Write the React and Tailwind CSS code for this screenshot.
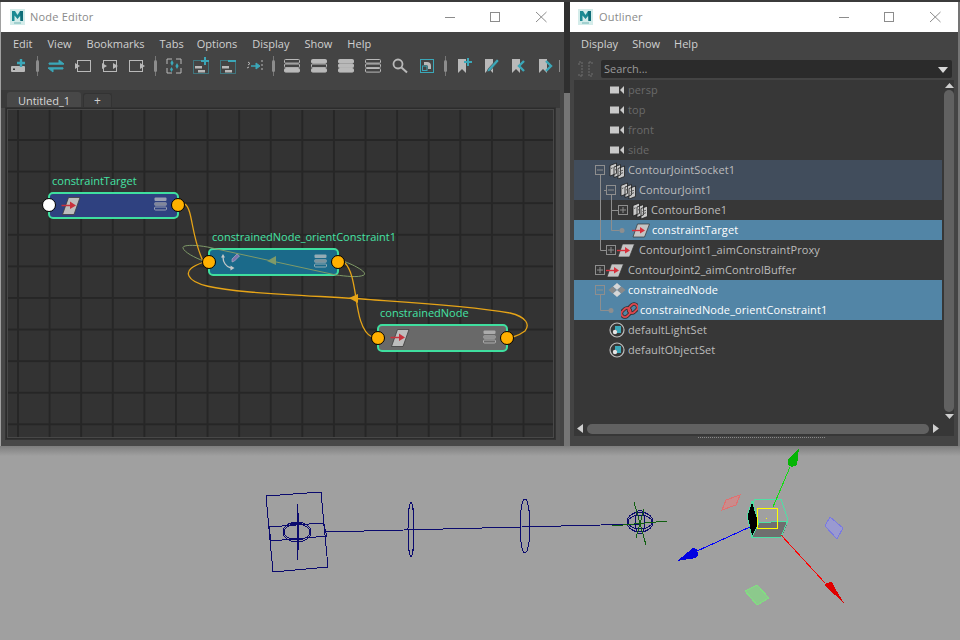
import React from "react";

const TEAL = "#3ba7b8";
const GR = "#b9b9b9";

function MayaLogo() {
  return (
    <svg width="15" height="16" viewBox="0 0 15 16" className="shrink-0">
      <rect width="15" height="16" fill="#d4ecea" />
      <polygon points="2,12 2,2 5,2 7.5,6 10,2 13,2 13,12 10.5,12 10.5,6.5 7.5,10 4.5,6.5 4.5,12" fill="#1b8a92" />
      <polygon points="10,2 13,2 13,12 10.5,12" fill="#0f6d78" />
      <rect x="4" y="13.5" width="7" height="1" fill="#6fb3b3" />
    </svg>
  );
}

function WinControls({ className }) {
  return (
    <div className={`flex items-center ${className}`}>
      <svg width="112" height="12" viewBox="0 0 112 12" stroke="#8c8c8c" fill="none">
        <path d="M0 6.500h10" />
        <rect x="45.500" y="1.500" width="9" height="9" />
        <path d="M91 1l10.500 10M101.500 1L91 11" />
      </svg>
    </div>
  );
}

function Sep() {
  return (
    <div className="relative w-[10px] h-[22px] flex items-center justify-center shrink-0">
      <div className="w-px h-[20px] bg-[#777777]" />
      <div className="absolute w-[3px] h-[12px] bg-[#8d8d8d] rounded-sm" />
    </div>
  );
}

function Ic({ children }) {
  return (
    <div className="w-[27px] h-[22px] flex items-center justify-center shrink-0">
      <svg width="18" height="18" viewBox="0 0 18 18" fill="none">{children}</svg>
    </div>
  );
}

function Stack({ kind }) {
  const bars = [2.5, 7, 11.5];
  return (
    <Ic>
      {bars.map((y, i) => (
        <rect key={y} x="1.500" y={y} width="15" height="3.600" rx="1"
          fill={kind[i] ? GR : "none"} stroke={GR} strokeWidth="1" />
      ))}
    </Ic>
  );
}

function Bookmark({ children }) {
  return (
    <Ic>
      <path d="M3 2h8v14l-4-4-4 4z" fill={GR} />
      {children}
    </Ic>
  );
}

function Toolbar() {
  return (
    <div className="h-[22px] flex items-center pl-[4px] mt-[-1px]">
      <Ic>
        <rect x="1" y="9" width="14" height="6" rx="1" fill={GR} />
        <rect x="3" y="11.500" width="2" height="1.500" fill="#333" />
        <path d="M11 2v8M7 6h8" stroke={TEAL} strokeWidth="2.400" />
      </Ic>
      <Sep />
      <Ic>
        <path d="M2 6h10V3l5 4-1 .2H2zM16 12H6v3L1 11l1-.2h14z" fill={TEAL} stroke={TEAL} />
      </Ic>
      <Ic>
        <rect x="3.500" y="3.500" width="13" height="11" stroke={GR} />
        <path d="M1 6l5 3-5 3z" fill={GR} />
      </Ic>
      <Ic>
        <rect x="2.500" y="3.500" width="13" height="11" stroke={GR} />
        <path d="M1 6l5 3-5 3zM12 6l5 3-5 3z" fill={GR} />
      </Ic>
      <Ic>
        <rect x="1.500" y="3.500" width="13" height="11" stroke={GR} />
        <path d="M12 6l5 3-5 3z" fill={GR} />
      </Ic>
      <Sep />
      <Ic>
        <path d="M2 7V2h5M11 2h5v5M16 11v5h-5M7 16H2v-5" stroke={GR} />
        <path d="M7 3l1.600 3L7 9 5.400 6zM12 6l1.600 3L12 12l-1.600-3zM6.500 10l1.500 2.500L6.500 15 5 12.500z" fill={TEAL} />
      </Ic>
      <Ic>
        <rect x="1.500" y="3.500" width="15" height="13" stroke={TEAL} strokeDasharray="1 1" />
        <rect x="3" y="9" width="7" height="2.500" fill={GR} />
        <rect x="6" y="13" width="7" height="2.500" fill={GR} />
        <path d="M13 0v8M9 4h8" stroke={TEAL} strokeWidth="2" />
      </Ic>
      <Ic>
        <rect x="1.500" y="3.500" width="15" height="13" stroke={TEAL} strokeDasharray="1 1" />
        <rect x="3" y="9" width="7" height="2.500" fill={GR} />
        <rect x="6" y="13" width="7" height="2.500" fill={GR} />
        <path d="M9 4h8" stroke={TEAL} strokeWidth="2" />
      </Ic>
      <Ic>
        <path d="M2 5l2 1.500L2 8M16 3v2M16 7v2M16 11v2M1 11l2-1" stroke={GR} />
        <path d="M5 9h5V6l4 3-4 3V9z" fill={TEAL} stroke={TEAL} />
      </Ic>
      <Sep />
      <Stack kind={[0, 0, 1]} />
      <Stack kind={[1, 0, 1]} />
      <Stack kind={[1, 1, 1]} />
      <Stack kind={[0, 0, 0]} />
      <Ic>
        <circle cx="7" cy="7" r="4.500" stroke={GR} strokeWidth="1.800" />
        <path d="M10.500 10.500l5.500 5" stroke={GR} strokeWidth="2" />
      </Ic>
      <Ic>
        <rect x="2.500" y="2.500" width="13" height="13" stroke={TEAL} />
        <rect x="4.500" y="9" width="4.500" height="4.500" stroke={TEAL} />
        <path d="M6 8V5h3a4 4 0 0 1 4 4v3h-3V9.500A1.500 1.500 0 0 0 8.500 8z" fill={GR} />
      </Ic>
      <Sep />
      <Bookmark>
        <path d="M13 1v8M9 5h8" stroke={TEAL} strokeWidth="2" />
      </Bookmark>
      <Bookmark>
        <path d="M6 12L15 2l2 2-9 10-3 1z" fill={TEAL} stroke="#444" strokeWidth="0.600" />
      </Bookmark>
      <Bookmark>
        <path d="M15 4l-5 5 5 5" stroke={TEAL} strokeWidth="2.400" />
      </Bookmark>
      <Bookmark>
        <path d="M10 4l5 5-5 5" stroke={TEAL} strokeWidth="2.400" />
      </Bookmark>
      <div className="w-px h-[12px] bg-[#8d8d8d] ml-[1px]" />
    </div>
  );
}

function AimNodeIcon() {
  return (
    <svg width="20" height="20" viewBox="0 0 20 20" className="shrink-0">
      <polygon points="7.500,1.500 19,1.500 13,18.500 1.500,18.500" fill="#bdbdbd" stroke="#3c3c3c" strokeWidth="0.800" />
      <path d="M0.500 9.500h11" stroke="#c8313c" strokeWidth="1.500" />
      <polygon points="9,5.500 15,9.500 9,13" fill="#c8313c" />
    </svg>
  );
}

function AimRowIcon() {
  return (
    <svg width="18" height="15" viewBox="0 0 18 15" className="shrink-0">
      <polygon points="5.500,1 17.500,1 12.500,14 1,14" fill="#c4c4c4" stroke="#333" strokeWidth="0.700" />
      <path d="M0 7.500h10" stroke="#d8303c" strokeWidth="1.400" />
      <polygon points="8,4 13,7.500 8,10.500" fill="#d8303c" />
    </svg>
  );
}

function NodeStack() {
  return (
    <svg width="13" height="14" viewBox="0 0 13 14" fill="none" className="shrink-0 opacity-70 mb-[3px]">
      <rect x="0.500" y="0.500" width="12" height="3.500" rx="1" fill="#c8c8c8" />
      <rect x="0.500" y="5.500" width="12" height="3" rx="1" fill="#a5a5a5" stroke="#c8c8c8" strokeWidth="0.500" />
      <rect x="0.500" y="10" width="12" height="3" rx="1" stroke="#c8c8c8" />
    </svg>
  );
}

function OrientIcon() {
  return (
    <svg width="24" height="22" viewBox="0 0 24 22" fill="none" className="shrink-0 ml-[-2px]">
      <path d="M4 6c0 5 3 10 8 11" stroke="#c4c8c8" strokeWidth="1.300" />
      <path d="M2 6.500L4 3l2 3.500zM11.500 14.500l4 2.500-4 2.500z" fill="#c4c8c8" />
      <path d="M13 8l5-5 2.500 2-5 5-2.500 1z" fill="#7d74ad" stroke="#b8b8c8" strokeWidth="0.600" />
    </svg>
  );
}

function Port({ white, className }) {
  return (
    <div className={`absolute z-20 w-[14px] h-[14px] rounded-full border border-black ${white ? "bg-white" : "bg-[#ffb000]"} ${className}`} />
  );
}

function GraphNode({ label, fill, icon, className, labelClass, portTop, whiteIn }) {
  return (
    <div className={`absolute w-[131px] rounded-[5px] border-2 border-[#3fdf9f] ${fill} ${className}`}>
      <div className={`absolute top-[-21px] text-[11px] leading-[16px] whitespace-nowrap text-[#45e3a5] ${labelClass}`}>{label}</div>
      <div className="h-full flex items-center justify-between pl-[11px] pr-[10px]">
        {icon}
        <NodeStack />
      </div>
      <Port white={whiteIn} className={`left-[-8px] ${portTop}`} />
      <Port className={`right-[-8px] ${portTop}`} />
    </div>
  );
}

function NodeEditor() {
  return (
    <div className="w-[563px] ml-px h-full flex flex-col bg-[#444444] shrink-0">
      <div className="h-[30px] bg-white flex items-center pl-[9px] shrink-0">
        <MayaLogo />
        <span className="ml-[5px] text-[11px] text-[#8a8a8a] tracking-[0.2px]">Node Editor</span>
        <WinControls className="ml-auto mr-[7px]" />
      </div>
      <div className="h-[24px] flex items-center gap-[15px] pl-[12px] text-[11px] text-[#d0d0d0]">
        <span>Edit</span><span>View</span><span>Bookmarks</span><span>Tabs</span><span className="ml-[-2px]">Options</span><span>Display</span><span>Show</span><span>Help</span>
      </div>
      <Toolbar />
      <div className="h-[13px]" />
      <div className="flex-1 flex flex-col bg-[#3a3a3a] mr-[4px]">
        <div className="h-[18px] flex items-end pl-[6px] gap-[2px]">
          <div className="w-[74px] h-[16px] bg-[#484848] rounded-t-[3px] text-[11px] text-[#d8d8d8] flex items-center justify-center leading-none">Untitled_1</div>
          <div className="w-[29px] h-[15px] bg-[#3e3e3e] border border-b-0 border-[#333] rounded-t-[3px] text-[12px] text-[#d0d0d0] flex items-center justify-center leading-none">+</div>
        </div>
        <div className="flex-1 bg-[#484848] px-[5px] pb-[7px]">
          <div className="h-full border border-[#2c2c2c] outline-1 outline-[#333] p-px">
            <div className="relative h-full bg-[#333333] bg-[linear-gradient(#262626_2px,transparent_2px),linear-gradient(90deg,#262626_2px,transparent_2px)] bg-[size:31.6px_31.6px] bg-[position:9px_29px]">
              <GraphNode label="constraintTarget" fill="bg-[#2f4180]" icon={<AimNodeIcon />} className="left-[40px] top-[82px] h-[27px]" labelClass="left-[2px]" portTop="top-[4px]" whiteIn />
              <GraphNode label="constrainedNode_orientConstraint1" fill="bg-[#1b6a8a]" icon={<OrientIcon />} className="left-[200px] top-[138px] h-[28px]" labelClass="left-[2px]" portTop="top-[5px]" />
              <GraphNode label="constrainedNode" fill="bg-[#696969]" icon={<AimNodeIcon />} className="left-[369px] top-[214px] h-[28px]" labelClass="left-[1px]" portTop="top-[5px]" />
              <svg className="absolute z-10 left-0 top-0 pointer-events-none" width="549" height="326" viewBox="8 110 549 326" fill="none">
                <path d="M343 261C352 264 368 272 364 275C358 278 345 276 336 275L212 248C200 245 182 244 183 248C184 252 195 258 204 261" stroke="#7f9a68" />
                <polygon points="267,261 276,256 276,265" fill="#7f9a68" />
                <path d="M185 204C193 210 191 236 203 261" stroke="#e6a417" strokeWidth="1.300" />
                <path d="M204 262C193 266 186 270 189 276C193 285 215 289 250 292C300 296 340 297 375 300C420 303 470 306 510 313C527 317 530 325 525 331C521 334 517 336 513 337" stroke="#e6a417" strokeWidth="1.300" />
                <path d="M345 263C352 270 354 286 356 298C358 312 361 332 372 337" stroke="#e6a417" strokeWidth="1.300" />
                <polygon points="349,298 358,294 358,303" fill="#e6a417" />
              </svg>
            </div>
          </div>
        </div>
      </div>
    </div>
  );
}

function Box({ plus }) {
  return (
    <svg width="10" height="10" viewBox="0 0 10 10" fill="none" className="shrink-0" stroke="#8e8e8e">
      <rect x="0.500" y="0.500" width="9" height="9" />
      <path d={plus ? "M2 5h6M5 2v6" : "M2 5h6"} />
    </svg>
  );
}

function CamIcon() {
  return (
    <svg width="15" height="10" viewBox="0 0 15 10" className="shrink-0">
      <rect x="0" y="1.500" width="9" height="7" fill="#c9c9c9" />
      <polygon points="10,5 14,1 14,9" fill="#c9c9c9" />
    </svg>
  );
}

function GroupIcon() {
  return (
    <svg width="17" height="17" viewBox="0 0 17 17" fill="none" className="shrink-0">
      <path d="M1 3.500L7.500 1v10.500L1 14zM5 5L11.500 2.500V13L5 15.500zM9 6.500L15.500 4v10.500L9 17z" fill="#c9c9c9" stroke="#1e1e1e" strokeWidth="0.800" />
      <path d="M2 6.500l1.500-.6M6 8l1.500-.6M10.500 9.500l3.500-1.300M10.500 12l3.500-1.300" stroke="#555" />
    </svg>
  );
}

function DiamondIcon() {
  return (
    <svg width="18" height="14" viewBox="0 0 18 14" className="shrink-0">
      <polygon points="9,0 13,3.500 9,7 5,3.500" fill="#d6d6d6" />
      <polygon points="4.500,3.500 8.500,7 4.500,10.500 0.500,7" fill="#8a8a8a" />
      <polygon points="13.500,3.500 17.500,7 13.500,10.500 9.500,7" fill="#8a8a8a" />
      <polygon points="9,7 13,10.500 9,14 5,10.500" fill="#d6d6d6" />
    </svg>
  );
}

function LinkIcon() {
  return (
    <svg width="17" height="17" viewBox="0 0 17 17" fill="none" className="shrink-0">
      <g stroke="#2a2a2a" strokeWidth="3.500">
        <rect x="8.500" y="1.500" width="7" height="10" rx="3.500" transform="rotate(45 12 6.500)" />
        <rect x="1.500" y="5.500" width="7" height="10" rx="3.500" transform="rotate(45 5 10.500)" />
      </g>
      <g stroke="#d9484f" strokeWidth="2">
        <rect x="8.500" y="1.500" width="7" height="10" rx="3.500" transform="rotate(45 12 6.500)" />
        <rect x="1.500" y="5.500" width="7" height="10" rx="3.500" transform="rotate(45 5 10.500)" />
      </g>
    </svg>
  );
}

function SetIcon() {
  return (
    <svg width="16" height="16" viewBox="0 0 16 16" fill="none" className="shrink-0">
      <circle cx="8" cy="8" r="7" stroke="#bdbdbd" strokeWidth="1.200" />
      <path d="M6 4h6v7H8V8H6z" fill="#3ba7b8" />
      <circle cx="6" cy="10" r="2.200" fill="#e4e4e4" />
    </svg>
  );
}

const rows = [
  { t: "persp", icon: <CamIcon />, pad: "pl-[20px]", dim: true },
  { t: "top", icon: <CamIcon />, pad: "pl-[20px]", dim: true },
  { t: "front", icon: <CamIcon />, pad: "pl-[20px]", dim: true },
  { t: "side", icon: <CamIcon />, pad: "pl-[20px]", dim: true },
  { t: "ContourJointSocket1", icon: <GroupIcon />, pad: "pl-[20px]", box: "minus", bg: "bg-[#414d5c]" },
  { t: "ContourJoint1", icon: <GroupIcon />, pad: "pl-[31px]", box: "minus", bg: "bg-[#414d5c]" },
  { t: "ContourBone1", icon: <GroupIcon />, pad: "pl-[43px]", box: "plus" },
  { t: "constraintTarget", icon: <AimRowIcon />, pad: "pl-[44px]", bg: "bg-[#5285a6]", sel: true },
  { t: "ContourJoint1_aimConstraintProxy", icon: <AimRowIcon />, pad: "pl-[31px]", box: "plus", shift: true },
  { t: "ContourJoint2_aimControlBuffer", icon: <AimRowIcon />, pad: "pl-[20px]", box: "plus", shift: true },
  { t: "constrainedNode", icon: <DiamondIcon />, pad: "pl-[20px]", box: "minus", bg: "bg-[#5285a6]", white: true },
  { t: "constrainedNode_orientConstraint1", icon: <LinkIcon />, pad: "pl-[32px]", bg: "bg-[#5285a6]", sel: true },
  { t: "defaultLightSet", icon: <SetIcon />, pad: "pl-[20px]" },
  { t: "defaultObjectSet", icon: <SetIcon />, pad: "pl-[20px]" },
];

function Row({ r }) {
  const color = r.dim ? "text-[#6a6a6a]" : r.sel || r.white ? "text-white" : "text-[#bcbcbc]";
  return (
    <div className={`h-[20px] flex items-center ${r.pad} ${r.bg || ""}`}>
      <div className="w-[12px] flex items-center justify-center shrink-0">
        {r.box && <Box plus={r.box === "plus"} />}
      </div>
      <div className={`w-[22px] flex items-center justify-center shrink-0 ${r.shift ? "pr-[4px]" : ""}`}>{r.icon}</div>
      <span className={`text-[11px] leading-[20px] tracking-[0.1px] whitespace-nowrap ${color}`}>{r.t}</span>
    </div>
  );
}

function Outliner() {
  return (
    <div className="w-[388px] h-full flex flex-col bg-[#444444] shrink-0">
      <div className="h-[30px] bg-white flex items-center pl-[8px] shrink-0">
        <MayaLogo />
        <span className="ml-[6px] text-[11px] text-[#8a8a8a] tracking-[0.2px]">Outliner</span>
        <WinControls className="ml-auto mr-[7px]" />
      </div>
      <div className="h-[24px] flex items-center gap-[14px] pl-[11px] text-[11px] text-[#d0d0d0]">
        <span>Display</span><span>Show</span><span>Help</span>
      </div>
      <div className="h-[24px] flex items-center pl-[8px] pr-[6px] pt-[2px] gap-[8px]">
        <svg width="15" height="16" viewBox="0 0 15 16" fill="none" stroke="#6e6e6e" className="shrink-0">
          <path d="M1 4V1h3M11 1h3v3M14 12v3h-3M4 15H1v-3M4 1v14M11 1v14" strokeDasharray="2 1" />
        </svg>
        <div className="relative flex-1 h-[18px] bg-[#2b2b2b] rounded-[2px] flex items-center pl-[3px] text-[11px] text-[#9a9a9a]">
          Search...
          <svg width="10" height="6" viewBox="0 0 10 6" className="absolute right-[4px] top-[7px]">
            <polygon points="0,0 10,0 5,6" fill="#d8d8d8" />
          </svg>
        </div>
      </div>
      <div className="flex-1 flex flex-col pl-[4px] pr-[4px]">
        <div className="relative flex-1 flex bg-[#373737]">
          <div className="flex-1">
            {rows.map((r) => <Row key={r.t} r={r} />)}
          </div>
          <div className="w-[12px] flex flex-col items-end py-[3px] gap-[2px]">
            <svg width="9" height="5" viewBox="0 0 9 5" className="shrink-0"><polygon points="0,5 9,5 4.500,0" fill="#cfcfcf" /></svg>
            <div className="flex-1 w-[10px] bg-[#616161] rounded-[5px]" />
            <svg width="9" height="5" viewBox="0 0 9 5" className="shrink-0"><polygon points="0,0 9,0 4.500,5" fill="#cfcfcf" /></svg>
          </div>
          {/* tree connector lines */}
          <svg className="absolute left-0 top-0 pointer-events-none" width="70" height="260" viewBox="574 80 70 260" fill="none" stroke="#8e8e8e">
            <path d="M600.500 175v75.500h6M604 190.500h3M611.500 195v35.500h8M611.500 210.500h7" />
            <path d="M600.500 295v15.500h10" />
            <circle cx="622" cy="230.500" r="2.500" fill="#8e8e8e" stroke="none" />
            <circle cx="611" cy="310.500" r="2.500" fill="#8e8e8e" stroke="none" />
          </svg>
        </div>
        <div className="h-[14px] bg-[#373737] flex items-center gap-[2px] px-[3px] pb-[1px]">
          <svg width="6" height="9" viewBox="0 0 6 9" className="shrink-0"><polygon points="6,0 6,9 0,4.500" fill="#cfcfcf" /></svg>
          <div className="w-[342px] h-[10px] bg-[#616161] rounded-[5px] ml-[2px]" />
          <svg width="6" height="9" viewBox="0 0 6 9" className="shrink-0 ml-[2px]"><polygon points="0,0 0,9 6,4.500" fill="#cfcfcf" /></svg>
        </div>
        <div className="h-[10px] flex justify-center pt-[1px] pr-[6px]">
          <div className="w-[127px] h-px border-t border-dotted border-[#8a8a8a]" />
        </div>
      </div>
    </div>
  );
}

function Viewport() {
  return (
    <div className="flex-1 bg-[#a0a0a0] bg-[linear-gradient(#7e7e7e,#a0a0a0_10px)]">
      <svg width="960" height="194" viewBox="0 446 960 194" fill="none" className="block">
        <g stroke="#0a0a6e" shapeRendering="crispEdges">
          <path d="M266 496L321 492L328 567L273 572Z" />
          <path d="M269 527L323 523L327 536L271 541Z" />
          <ellipse cx="297" cy="532" rx="14" ry="10" />
          <ellipse cx="297" cy="532" rx="13" ry="8" />
          <path d="M297 504V560" />
          <path d="M298 513V550M290 524h12M290 539h12" strokeWidth="2" />
          <path d="M325 532L640 524" />
          <ellipse cx="411" cy="529.500" rx="3" ry="27" />
          <ellipse cx="525" cy="526" rx="5" ry="27" />
          <ellipse cx="640" cy="522" rx="13" ry="10" />
          <ellipse cx="640" cy="522" rx="5" ry="12" />
          <ellipse cx="640" cy="522" rx="12" ry="7" />
        </g>
        <g stroke="#106010" shapeRendering="crispEdges">
          <path d="M612 526L667 521M634 502L646 545M636 538L644 509" />
        </g>
        <g shapeRendering="crispEdges">
          <polygon points="722,510 726,500 740,495 736,505" fill="#c98d8d" stroke="#e07070" />
          <polygon points="830,517 843,528 837,539 825,526" fill="#9a9ad0" stroke="#7a7ae0" />
          <polygon points="757,585 769,598 757,605 745,591" fill="#8cc98c" stroke="#80e080" />
          <polygon points="755,523 788,522 782,537 752,538" fill="#6f6f6f" />
          <polygon points="755,499 781,499 788,520 781,537 752,538 748,516" stroke="#4fe0a5" />
          <path d="M755 523L788 521" stroke="#4fe0a5" />
          <polygon points="752,501 759,523 752,537 747,516" fill="#000" stroke="#4fe0a5" />
          <rect x="757" y="508" width="20" height="20" stroke="#ffff00" strokeWidth="1" />
          <rect x="766" y="518" width="1" height="1" fill="#ffff00" />
          <path d="M773 507L790 467" stroke="#10e010" />
          <path d="M750 527L697 551" stroke="#0000ff" />
          <path d="M781 535L825 583" stroke="#ff0000" />
          <polygon points="799,448 797,465 792,467 788,465 788,460" fill="#05b505" />
          <polygon points="677,561 693,548 697,549 698,555 696,558" fill="#0000e0" />
          <polygon points="844,603 825,586 826,583 832,582 836,590" fill="#e00000" />
        </g>
      </svg>
    </div>
  );
}

export default function App() {
  return (
    <div className="w-[960px] h-[640px] overflow-hidden flex flex-col bg-[#a0a0a0] font-['Open_Sans',sans-serif]">
      <div className="h-[2px] bg-[#3b3b3b] shrink-0" />
      <div className="h-[444px] flex shrink-0">
        <NodeEditor />
        <div className="w-[6px] flex flex-col shrink-0">
          <div className="h-[91px] bg-[#2f2f2f]" />
          <div className="flex-1 bg-[#757575]" />
        </div>
        <Outliner />
        <div className="w-[2px] bg-[#757575]" />
      </div>
      <Viewport />
    </div>
  );
}
